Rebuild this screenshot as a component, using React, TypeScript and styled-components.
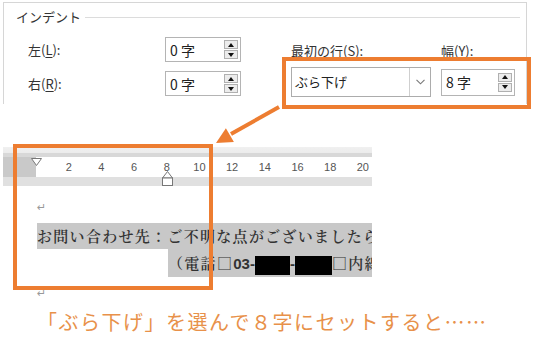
import styled, { createGlobalStyle } from 'styled-components'

const ORANGE = '#ed7d31'

const GlobalStyle = createGlobalStyle`
  html, body {
    margin: 0;
    padding: 0;
    background: #fff;
  }
  body {
    font-family: "Noto Sans CJK JP", "Noto Sans", sans-serif;
    color: #333;
  }
`

const Page = styled.div`
  position: relative;
  width: 538px;
  height: 352px;
  overflow: hidden;
  background: #fff;
`

/* ---- dialog crop ---- */
const Dialog = styled.div`
  box-sizing: border-box;
  width: 524px;
  height: 102px;
  margin: 2px 0 0 3px;
  padding: 5px 6px 0 12px;
  border: 1px solid #d6d6d6;
  border-bottom: none;
  background: #fff;
`
const GroupHeader = styled.div`
  display: flex;
  align-items: center;
  gap: 4px;
  font-size: 13px;
  line-height: 18px;
`
const GroupRule = styled.div`
  flex: 1;
  height: 1px;
  background: #dcdcdc;
`
const Fields = styled.div`
  display: flex;
  margin-top: 11px;
  padding-left: 12px;
`
const LeftCol = styled.div`
  display: grid;
  grid-template-columns: 137px 76px;
  grid-auto-rows: 25px;
  row-gap: 9px;
  align-items: center;
`
const RightCol = styled.div`
  display: grid;
  grid-template-columns: 150px 74px;
  grid-template-rows: 18px 30px;
  row-gap: 7px;
  align-items: center;
  margin-left: 50px;
  padding-top: 5px;
`
const Label = styled.div`
  font-size: 13px;
  line-height: 18px;
  color: #333;
  white-space: nowrap;
  u {
    text-decoration: underline;
    text-underline-offset: 2px;
  }
`
const SpinBox = styled.div<{ $h: number }>`
  box-sizing: border-box;
  display: flex;
  align-items: center;
  height: ${({ $h }) => $h}px;
  padding: 0 2px 0 4px;
  border: 1px solid #b4b4b4;
  background: #fff;
`
const SpinValue = styled.div`
  flex: 1;
  font-size: 14px;
  color: #222;
  white-space: pre;
`
const SpinButtons = styled.div`
  display: flex;
  flex-direction: column;
  gap: 1px;
  width: 14px;
`
const SpinButton = styled.div`
  box-sizing: border-box;
  display: flex;
  align-items: center;
  justify-content: center;
  height: 9px;
  border: 1px solid #b0b0b0;
  background: #ececec;
`
const Dropdown = styled.div`
  box-sizing: border-box;
  display: flex;
  width: 140px;
  height: 30px;
  border: 1px solid #acacac;
  background: #fff;
`
const DropText = styled.div`
  flex: 1;
  padding-left: 3px;
  font-size: 13px;
  line-height: 28px;
  color: #222;
`
const DropArrow = styled.div`
  display: flex;
  align-items: center;
  justify-content: center;
  width: 20px;
  border-left: 1px solid #cfcfcf;
`

/* ---- ruler crop ---- */
const Ruler = styled.div`
  position: relative;
  width: 369px;
  margin: 43px 0 0 3px;
`
const RulerTop = styled.div`
  height: 10px;
  background: linear-gradient(#f0f0f0 0%, #ececec 55%, #d8d8d8 60%, #d8d8d8 100%);
`
const RulerBand = styled.div`
  position: relative;
  display: flex;
  height: 20px;
  overflow: hidden;
  background: #fff;
`
const RulerMargin = styled.div`
  flex: none;
  width: 33px;
  background: #c9c9c9;
`
const RulerScale = styled.div`
  display: flex;
  padding-left: 16.35px;
`
const Tick = styled.div`
  flex: none;
  width: 32.7px;
  text-align: center;
  font-family: "Liberation Sans", Arial, sans-serif;
  font-size: 11px;
  line-height: 20px;
  color: #555;
`
const RulerBottom = styled.div`
  height: 9px;
  background: #e0e0e0;
`
const Marker = styled.svg<{ $x: number; $y: number }>`
  position: absolute;
  left: ${({ $x }) => $x}px;
  top: ${({ $y }) => $y}px;
`

/* ---- document crop ---- */
const Doc = styled.div`
  box-sizing: border-box;
  width: 369px;
  margin-left: 3px;
  padding-left: 34px;
  overflow: hidden;
`
const ParaMark = styled.div<{ $top: number }>`
  height: 14px;
  margin-top: ${({ $top }) => $top}px;
  font-family: "DejaVu Sans", sans-serif;
  font-size: 11px;
  line-height: 14px;
  color: #999;
`
const DocLine = styled.div<{ $indent: number; $h: number; $top: number }>`
  height: ${({ $h }) => $h}px;
  margin-top: ${({ $top }) => $top}px;
  margin-left: ${({ $indent }) => $indent}px;
  white-space: nowrap;
`
const Shade = styled.span<{ $h: number }>`
  display: inline-block;
  height: ${({ $h }) => $h}px;
  line-height: ${({ $h }) => $h}px;
  padding-right: 40px;
  background: #c8c8c8;
  font-family: "Noto Serif CJK JP", "Noto Sans CJK JP", serif;
  font-size: 15px;
  font-weight: 600;
  letter-spacing: 1.3px;
  color: #333;
`
const Latin = styled.span`
  font-family: "Liberation Sans", Arial, sans-serif;
  font-weight: 700;
  letter-spacing: 0;
`
const Redact = styled.span<{ $w: number }>`
  display: inline-block;
  width: ${({ $w }) => $w}px;
  height: 19px;
  vertical-align: middle;
  background: #000;
`

const Caption = styled.div`
  margin-top: 7px;
  padding-left: 37px;
  font-size: 20px;
  line-height: 28px;
  letter-spacing: 1.5px;
  color: #e8914a;
  white-space: nowrap;
`

/* ---- annotations ---- */
const Frame = styled.div<{ $x: number; $y: number; $w: number; $h: number }>`
  position: absolute;
  left: ${({ $x }) => $x}px;
  top: ${({ $y }) => $y}px;
  width: ${({ $w }) => $w}px;
  height: ${({ $h }) => $h}px;
  box-sizing: border-box;
  border: 4px solid ${ORANGE};
`
const Arrow = styled.svg`
  position: absolute;
  left: 210px;
  top: 100px;
`

const UpDown = () => (
  <SpinButtons>
    <SpinButton>
      <svg width="6" height="4" viewBox="0 0 6 4"><path d="M0 4 L3 0 L6 4 Z" fill="#111" /></svg>
    </SpinButton>
    <SpinButton>
      <svg width="6" height="4" viewBox="0 0 6 4"><path d="M0 0 L3 4 L6 0 Z" fill="#111" /></svg>
    </SpinButton>
  </SpinButtons>
)

const ticks = [2, 4, 6, 8, 10, 12, 14, 16, 18, 20]

export default function App() {
  return (
    <Page>
      <GlobalStyle />

      <Dialog>
        <GroupHeader>
          <span>インデント</span>
          <GroupRule />
        </GroupHeader>
        <Fields>
          <LeftCol>
            <Label>左(<u>L</u>):</Label>
            <SpinBox $h={25}>
              <SpinValue>0 字</SpinValue>
              <UpDown />
            </SpinBox>
            <Label>右(<u>R</u>):</Label>
            <SpinBox $h={25}>
              <SpinValue>0 字</SpinValue>
              <UpDown />
            </SpinBox>
          </LeftCol>
          <RightCol>
            <Label>最初の行(<u>S</u>):</Label>
            <Label>幅(<u>Y</u>):</Label>
            <Dropdown>
              <DropText>ぶら下げ</DropText>
              <DropArrow>
                <svg width="9" height="6" viewBox="0 0 9 6">
                  <path d="M0.5 0.8 L4.5 4.8 L8.5 0.8" fill="none" stroke="#777" strokeWidth="1.1" />
                </svg>
              </DropArrow>
            </Dropdown>
            <SpinBox $h={27}>
              <SpinValue>8 字</SpinValue>
              <UpDown />
            </SpinBox>
          </RightCol>
        </Fields>
      </Dialog>

      <Ruler>
        <RulerTop />
        <RulerBand>
          <RulerMargin />
          <RulerScale>
            {ticks.map((n) => (
              <Tick key={n}>{n}</Tick>
            ))}
          </RulerScale>
          <Marker $x={28} $y={1} width="11" height="8" viewBox="0 0 11 8">
            <path d="M0.5 0.5 H10.5 L5.5 7.5 Z" fill="#fff" stroke="#777" strokeWidth="1" />
          </Marker>
        </RulerBand>
        <RulerBottom />
        <Marker $x={159} $y={24} width="11" height="15" viewBox="0 0 11 15">
          <path d="M5.5 0.5 L10.5 7 H0.5 Z" fill="#fff" stroke="#777" strokeWidth="1" />
          <rect x="0.5" y="7" width="10" height="7.5" fill="#fff" stroke="#777" strokeWidth="1" />
        </Marker>
      </Ruler>

      <Doc>
        <ParaMark $top={15}>↵</ParaMark>
        <DocLine $indent={0} $h={26} $top={8}>
          <Shade $h={26}>お問い合わせ先：ご不明な点がございましたら</Shade>
        </DocLine>
        <DocLine $indent={131} $h={28} $top={0}>
          <Shade $h={28}>
            （電話□<Latin>03-</Latin>
            <Redact $w={35} />
            <Latin>-</Latin>
            <Redact $w={37} />
            □内線
          </Shade>
        </DocLine>
        <ParaMark $top={10}>↵</ParaMark>
      </Doc>

      <Caption>「ぶら下げ」を選んで８字にセットすると……</Caption>

      <Frame $x={282} $y={57} $w={249} $h={52} />
      <Frame $x={13} $y={144} $w={200} $h={146} />
      <Arrow width="80" height="50" viewBox="0 0 80 50">
        <line x1="69" y1="7" x2="21" y2="34" stroke={ORANGE} strokeWidth="4" />
        <path d="M6 43 L23.9 42 L15.9 28.2 Z" fill={ORANGE} />
      </Arrow>
    </Page>
  )
}
